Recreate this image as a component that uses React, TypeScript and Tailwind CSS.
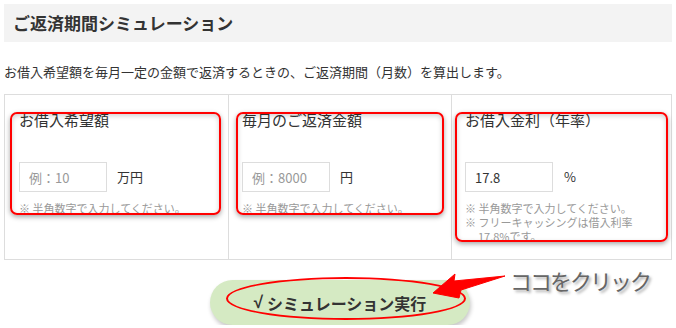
import React from "react";

const font = { fontFamily: '"Noto Sans CJK JP", "Noto Sans", sans-serif' };

function RedBox({ cls }: { cls: string }) {
  return (
    <div
      className={`pointer-events-none absolute rounded-[7px] border-2 border-[#ff0000] shadow-[0_2px_5px_rgba(0,0,0,0.35),inset_0_2px_5px_rgba(0,0,0,0.18)] ${cls}`}
    />
  );
}

function Field({
  label,
  placeholder,
  value,
  unit,
  unitGap,
}: {
  label: string;
  placeholder?: string;
  value?: string;
  unit: string;
  unitGap: string;
}) {
  return (
    <>
      <div className="text-[15px] leading-[22px] text-[#333]">{label}</div>
      <div className="mt-[31px] flex items-center">
        <input
          readOnly
          placeholder={placeholder}
          defaultValue={value}
          className="h-[30px] w-[88px] border border-[#ddd] bg-white px-[9px] text-[13px] text-[#333] outline-none placeholder:text-[#999]"
          style={font}
        />
        <span className={`${unitGap} text-[13px] text-[#333]`}>{unit}</span>
      </div>
    </>
  );
}

export default function App() {
  return (
    <div className="w-[676px] bg-white px-[4px] pt-[4px]" style={font}>
      <div className="flex h-[38px] items-center bg-[#f3f3f3] pl-[9px] text-[17px] font-bold text-[#333]">
        ご返済期間シミュレーション
      </div>
      <p className="mt-[20px] text-[13px] leading-[20px] text-[#333]">
        お借入希望額を毎月一定の金額で返済するときの、ご返済期間（月数）を算出します。
      </p>
      <div className="mt-[12px] flex border-b border-l border-t border-[#ddd]">
        <div className="relative w-[224px] border-r border-[#ddd] pb-[16px] pl-[14px] pt-[14px]">
          <Field label="お借入希望額" placeholder="例：10" unit="万円" unitGap="ml-[10px]" />
          <p className="mt-[9px] text-[11px] leading-[14px] text-[#999]">※ 半角数字で入力してください。</p>
          <RedBox cls="left-[5px] top-[17px] h-[103px] w-[211px]" />
        </div>
        <div className="relative w-[223px] border-r border-[#ddd] pb-[16px] pl-[13px] pt-[14px]">
          <Field label="毎月のご返済金額" placeholder="例：8000" unit="円" unitGap="ml-[10px]" />
          <p className="mt-[9px] text-[11px] leading-[14px] text-[#999]">※ 半角数字で入力してください。</p>
          <RedBox cls="left-[7px] top-[17px] h-[103px] w-[208px]" />
        </div>
        <div className="relative flex-1 border-r border-[#ddd] pb-[16px] pl-[13px] pt-[14px]">
          <Field label="お借入金利（年率）" value="17.8" unit="%" unitGap="ml-[11px]" />
          <div className="mt-[9px] flex flex-col text-[11px] text-[#999]">
            <p className="h-[14px] leading-[14px]">※ 半角数字で入力してください。</p>
            <p className="h-[14px] leading-[14px]">※ フリーキャッシングは借入利率</p>
            <p className="h-[14px] pl-[13px] leading-[14px]">17.8%です。</p>
          </div>
          <RedBox cls="left-[3px] top-[17px] h-[130px] w-[213px]" />
        </div>
      </div>
      <div className="relative ml-[206px] mt-[20px] h-[45px] w-[260px]">
        <button
          className="flex h-full w-full items-center justify-center rounded-full bg-[#d5eac3] text-[16px] font-bold text-[#333] shadow-[1px_3px_4px_rgba(0,0,0,0.22)]"
          style={font}
        >
          <span className="mr-[4px] text-[17px]" style={{ fontFamily: '"Liberation Sans", sans-serif' }}>
            √
          </span>
          シミュレーション実行
        </button>
        <div className="pointer-events-none absolute left-[16px] top-[-3px] h-[43px] w-[240px] rounded-[50%] border-2 border-[#ff0000]" />
        <svg
          className="pointer-events-none absolute left-[218px] top-[-12px]"
          width="90"
          height="34"
          viewBox="428 268 90 34"
        >
          <polygon
            points="433,293 455,274 454,281 505,276 461,290 459,298"
            fill="#ff0000"
            stroke="#ff0000"
            strokeWidth="1"
            strokeLinejoin="round"
          />
        </svg>
        <div className="pointer-events-none absolute left-[300px] top-[-13px] whitespace-nowrap text-[22px] leading-[26px] tracking-[-2px] text-[#666] [text-shadow:2px_2px_3px_rgba(0,0,0,0.35)]">
          ココをクリック
        </div>
      </div>
    </div>
  );
}
